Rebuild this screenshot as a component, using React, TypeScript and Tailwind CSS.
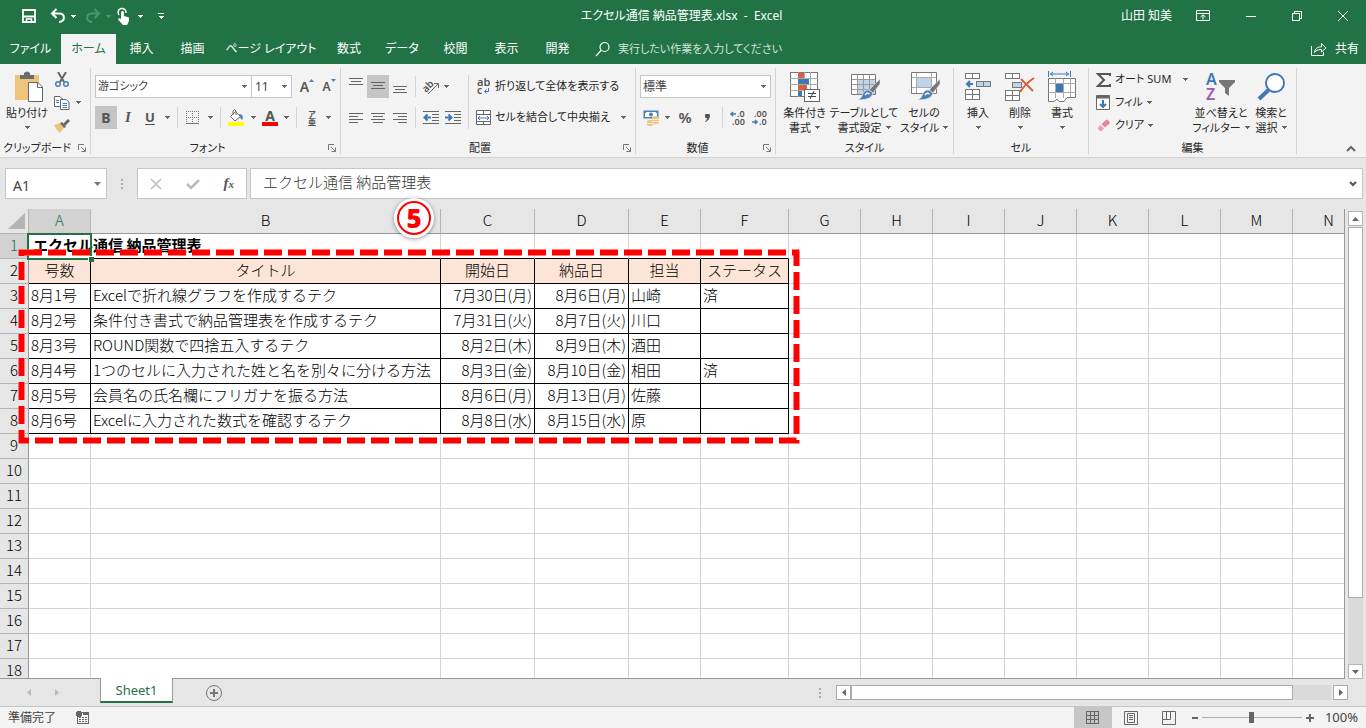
import type { ReactNode } from "react";

const tabs = [
    { name: "ファイル", width: "w-[61px]" },
    { name: "ホーム", width: "w-[55px]", active: true },
    { name: "挿入", width: "w-[51px]" },
    { name: "描画", width: "w-[51px]" },
    { name: "ページ レイアウト", width: "w-[106px]" },
    { name: "数式", width: "w-[50px]" },
    { name: "データ", width: "w-[56px]" },
    { name: "校閲", width: "w-[51px]" },
    { name: "表示", width: "w-[51px]" },
    { name: "開発", width: "w-[51px]" },
];

const columns = [
    { name: "A", width: "w-[62px]" },
    { name: "B", width: "w-[350px]" },
    { name: "C", width: "w-[94px]" },
    { name: "D", width: "w-[94px]" },
    { name: "E", width: "w-[72px]" },
    { name: "F", width: "w-[88px]" },
    ..."GHIJKLMNOPQR".split("").map((name) => ({ name, width: "w-[72px]" })),
];

const data = [
    ["号数", "タイトル", "開始日", "納品日", "担当", "ステータス"],
    ["8月1号", "Excelで折れ線グラフを作成するテク", "7月30日(月)", "8月6日(月)", "山崎", "済"],
    ["8月2号", "条件付き書式で納品管理表を作成するテク", "7月31日(火)", "8月7日(火)", "川口", ""],
    ["8月3号", "ROUND関数で四捨五入するテク", "8月2日(木)", "8月9日(木)", "酒田", ""],
    ["8月4号", "1つのセルに入力された姓と名を別々に分ける方法", "8月3日(金)", "8月10日(金)", "相田", "済"],
    ["8月5号", "会員名の氏名欄にフリガナを振る方法", "8月6日(月)", "8月13日(月)", "佐藤", ""],
    ["8月6号", "Excelに入力された数式を確認するテク", "8月8日(水)", "8月15日(水)", "原", ""],
];

const rowNumbers = Array.from({ length: 19 }, (_, i) => i + 1);

function Caret({ className = "fill-[#666]" }: { className?: string }) {
    return (
        <svg viewBox="0 0 5 3" className={`w-[5px] h-[3px] shrink-0 ${className}`} shapeRendering="crispEdges">
            <path d="M0 0H5L2.5 3Z" />
        </svg>
    );
}

function CaretButton({ label, className = "w-[10px]" }: { label: string; className?: string }) {
    return (
        <button aria-label={label} className={`h-[23px] flex items-center justify-center ${className}`}>
            <Caret />
        </button>
    );
}

function Tool({ label, on, className = "w-[22px]", children }: { label: string; on?: boolean; className?: string; children: ReactNode }) {
    return (
        <button aria-label={label} className={`h-[23px] flex items-center justify-center shrink-0 ${className} ${on ? "bg-[#c5c5c5]" : ""}`}>
            {children}
        </button>
    );
}

function Divider() {
    return <div className="w-px h-[21px] bg-[#d4d4d4] shrink-0" />;
}

function Group({ label, width, launcher, children }: { label: string; width: string; launcher?: boolean; children: ReactNode }) {
    return (
        <section className={`flex shrink-0 pt-1 ${width}`}>
            <div className="flex-1 flex flex-col">
                <div className="flex h-[71px]">{children}</div>
                <div className="flex items-center h-[18px]">
                    <span className="flex-1 text-center leading-[18px] whitespace-nowrap">{label}</span>
                    {launcher && (
                        <button aria-label={`${label}の設定`} className="w-4 flex justify-center">
                            <svg viewBox="0 0 8 8" className="w-2 h-2" fill="none" stroke="#777">
                                <path d="M0.5 6V0.5H6M3 3L7 7M7.5 3.5V7.5H3.5" />
                            </svg>
                        </button>
                    )}
                </div>
            </div>
            <div className="w-px h-[86px] bg-[#d4d4d4]" />
        </section>
    );
}

function BigButton({ icon, lines, width }: { icon: ReactNode; lines: string[]; width: string }) {
    return (
        <button className={`flex flex-col items-center shrink-0 h-[70px] whitespace-nowrap leading-[15px] ${width}`}>
            <span className="h-[37px] flex items-center justify-center">{icon}</span>
            <span>{lines[0]}</span>
            <span className="flex items-center gap-1 h-[15px]">
                {lines[1]}
                <Caret />
            </span>
        </button>
    );
}

function AlignIcon({ lines }: { lines: [number, number][] }) {
    return (
        <svg viewBox="0 0 14 12" className="w-[14px] h-3" stroke="#666" shapeRendering="crispEdges">
            {lines.map(([start, end], i) => (
                <path key={i} d={`M${start} ${i * 3 + 1.5}H${end}`} />
            ))}
        </svg>
    );
}

function ViewIcon({ d }: { d: string }) {
    return (
        <svg viewBox="0 0 16 16" className="w-4 h-4" fill="none" stroke="#666">
            <path d={d} />
        </svg>
    );
}

function TitleBar() {
    return (
        <header className="flex items-center h-8 text-white">
            <div className="flex-1 flex items-center pl-[21px]">
                <button aria-label="上書き保存" className="w-4 h-4">
                    <svg viewBox="0 0 16 16" className="w-4 h-4" fill="none" stroke="#fff" strokeWidth="1.800">
                        <path d="M2 2H14V14H2ZM2 8.500H14" />
                        <path d="M5.500 14V11H10.500V14" strokeWidth="1.500" />
                    </svg>
                </button>
                <button aria-label="元に戻す" className="w-4 h-4 ml-[13px]">
                    <svg viewBox="0 0 16 16" className="w-4 h-4" fill="none" stroke="#fff" strokeWidth="2">
                        <path d="M6.500 1L2 5.500L6.500 10M2.500 5.500H9C15.500 5.500 15.500 13.500 9 14" />
                    </svg>
                </button>
                <button aria-label="元に戻す一覧" className="flex items-center justify-center w-3 h-4 ml-px">
                    <Caret className="fill-white" />
                </button>
                <button aria-label="やり直し" className="w-4 h-4 ml-[6px]">
                    <svg viewBox="0 0 16 16" className="w-4 h-4" fill="none" stroke="#4f9370" strokeWidth="2">
                        <path d="M9.500 1L14 5.500L9.500 10M13.500 5.500H7C0.500 5.500 0.500 13.500 7 14" />
                    </svg>
                </button>
                <button aria-label="やり直し一覧" className="flex items-center justify-center w-3 h-4 ml-px">
                    <Caret className="fill-[#4f9370]" />
                </button>
                <button aria-label="タッチ/マウス モード" className="w-4 h-5 ml-[2px]">
                    <svg viewBox="0 0 16 20" className="w-4 h-5">
                        <path d="M3 9A4 4 0 1 1 10 7" fill="none" stroke="#fff" strokeWidth="1.500" />
                        <path d="M5 6Q6.500 4 8 6V10L13 11.500V15L11 19H7L2 13.500Q2.500 11.500 5 13Z" fill="#fff" />
                    </svg>
                </button>
                <button aria-label="モード一覧" className="flex items-center justify-center w-4 h-4">
                    <Caret className="fill-white" />
                </button>
                <button aria-label="クイック アクセス ツール バーのカスタマイズ" className="flex items-center justify-center w-4 h-4 ml-[5px]">
                    <svg viewBox="0 0 6 6" className="w-[6px] h-[6px]" fill="#fff" shapeRendering="crispEdges">
                        <path d="M0 0H6V1H0ZM0 3H6L3 6Z" />
                    </svg>
                </button>
            </div>
            <h1 className="whitespace-pre pr-2">エクセル通信 納品管理表.xlsx  -  Excel</h1>
            <div className="flex-1 flex items-center justify-end pr-4">
                <span className="mr-6">山田 知美</span>
                <button aria-label="リボンの表示オプション" className="mr-9">
                    <svg viewBox="0 0 14 12" className="w-[14px] h-3" fill="none" stroke="#fff">
                        <path d="M0.500 0.500H13.500V10.500H0.500ZM0.500 3.500H13.500M7 9.500V5M4.500 7L7 4.800L9.500 7" />
                    </svg>
                </button>
                <button aria-label="最小化" className="mr-9">
                    <svg viewBox="0 0 10 10" className="w-[10px] h-[10px]" stroke="#fff" shapeRendering="crispEdges">
                        <path d="M0 5.500H10" />
                    </svg>
                </button>
                <button aria-label="元のサイズに戻す" className="mr-9">
                    <svg viewBox="0 0 10 10" className="w-[10px] h-[10px]" fill="none" stroke="#fff" shapeRendering="crispEdges">
                        <path d="M0.500 2.500H7.500V9.500H0.500ZM2.500 2.500V0.500H9.500V7.500H7.500" />
                    </svg>
                </button>
                <button aria-label="閉じる" className="mr-[2px]">
                    <svg viewBox="0 0 10 10" className="w-[10px] h-[10px]" stroke="#fff">
                        <path d="M0 0L10 10M10 0L0 10" />
                    </svg>
                </button>
            </div>
        </header>
    );
}

function TabBar() {
    return (
        <nav className="flex items-end h-8 text-white">
            {tabs.map((tab) => (
                <button
                    key={tab.name}
                    className={`h-[30px] shrink-0 text-center whitespace-nowrap ${tab.width} ${tab.active ? "bg-[#f3f3f3] text-[#217346]" : ""}`}
                >
                    {tab.name}
                </button>
            ))}
            <label className="flex-1 flex items-center h-[30px] ml-3">
                <svg viewBox="0 0 16 16" className="w-4 h-4 mr-[7px]" fill="none" stroke="#fff" strokeWidth="1.200">
                    <circle cx="9.500" cy="6" r="4.500" />
                    <path d="M6.300 9.200L1 15" />
                </svg>
                <input
                    placeholder="実行したい作業を入力してください"
                    aria-label="操作アシスト"
                    className="w-[220px] bg-transparent outline-none text-[11px] placeholder:text-[#d3e3da]"
                />
            </label>
            <button className="flex items-center h-[30px] mr-[7px] gap-2">
                <svg viewBox="0 0 16 14" className="w-4 h-[14px]" fill="none" stroke="#fff">
                    <path d="M0.500 4V13.500H12.500V10M3.500 10.500C4 6.500 6.500 4.800 10.500 4.800V1.500L15 6L10.500 10V7.500C7 7.500 5 8.500 3.500 10.500Z" />
                </svg>
                共有
            </button>
        </nav>
    );
}

function ClipboardGroup() {
    return (
        <Group label="クリップボード" width="w-[91px]" launcher>
            <BigButton
                width="w-[54px]"
                lines={["貼り付け", ""]}
                icon={
                    <svg viewBox="0 0 30 32" className="w-[30px] h-8 ml-1">
                        <path d="M1 4H25V29H1Z" fill="#ecc47c" />
                        <path d="M6 8V4H10V2Q13 -1 16 2V4H20V8Z" fill="#6d6d6d" />
                        <path d="M14.500 11.500H24L28.500 16V30.500H14.500Z" fill="#fff" stroke="#666" />
                        <path d="M23.500 11.500V16.500H28.500" fill="none" stroke="#666" />
                    </svg>
                }
            />
            <div className="flex flex-col">
                <Tool label="切り取り" className="w-4">
                    <svg viewBox="0 0 16 16" className="w-4 h-4" fill="none" strokeWidth="1.500">
                        <path d="M4 0L10 10M12 0L6 10" stroke="#666" strokeWidth="2" />
                        <circle cx="4" cy="12" r="2.300" stroke="#4a80b8" />
                        <circle cx="12" cy="12" r="2.300" stroke="#4a80b8" />
                    </svg>
                </Tool>
                <div className="flex items-center">
                    <Tool label="コピー" className="w-4">
                        <svg viewBox="0 0 16 14" className="w-4 h-[14px]" fill="#fff" stroke="#666">
                            <path d="M0.500 0.500H6L8.500 3V10.500H0.500Z" />
                            <path d="M6.500 3.500H12L15 6V13.500H6.500Z" />
                            <path d="M2 4.500H5M2 6.500H5M8.500 7.500H13M8.500 9.500H13M8.500 11.500H13" stroke="#4a80b8" />
                        </svg>
                    </Tool>
                    <CaretButton label="コピーの一覧" className="w-4" />
                </div>
                <Tool label="書式のコピー/貼り付け" className="w-4">
                    <svg viewBox="0 0 16 14" className="w-4 h-[14px]">
                        <path d="M0 6L6 4L10 9L6 14Q2 11 0 6Z" fill="#ecc47c" />
                        <path d="M6 4L8 3L12 8L10 9Z" fill="#666" />
                        <path d="M10 6L15 1" stroke="#666" strokeWidth="3" />
                    </svg>
                </Tool>
            </div>
        </Group>
    );
}

function FontGroup() {
    return (
        <Group label="フォント" width="w-[250px]" launcher>
            <div className="flex flex-col gap-2 pl-1 pt-[7px]">
                <div className="flex items-center">
                    <div className="relative flex items-center">
                        <select aria-label="フォント名" className="appearance-none w-[157px] h-[23px] pl-[2px] bg-white border border-[#c6c6c6] text-[#444]">
                            <option>游ゴシック</option>
                        </select>
                        <Caret className="absolute right-[5px] pointer-events-none fill-[#666]" />
                    </div>
                    <div className="relative flex items-center -ml-px">
                        <select aria-label="フォント サイズ" className="appearance-none w-[41px] h-[23px] pl-[3px] bg-white border border-[#c6c6c6] text-[12px] text-[#444]">
                            <option>11</option>
                        </select>
                        <Caret className="absolute right-[5px] pointer-events-none fill-[#666]" />
                    </div>
                    <Tool label="フォント サイズの拡大" className="w-[22px] ml-1 text-[14px] font-semibold text-[#555]">
                        A
                        <svg viewBox="0 0 5 3" className="w-[5px] h-[3px] mb-3" fill="#4a80b8">
                            <path d="M0 3L2.500 0L5 3Z" />
                        </svg>
                    </Tool>
                    <Tool label="フォント サイズの縮小" className="w-[22px] text-[12px] font-semibold text-[#555]">
                        A
                        <svg viewBox="0 0 5 3" className="w-[5px] h-[3px] mb-3" fill="#4a80b8">
                            <path d="M0 0H5L2.500 3Z" />
                        </svg>
                    </Tool>
                </div>
                <div className="flex items-center text-[#555]">
                    <Tool label="太字" on>
                        <b className="text-[14px]">B</b>
                    </Tool>
                    <Tool label="斜体">
                        <i className="text-[15px] font-[Liberation_Serif] font-bold">I</i>
                    </Tool>
                    <Tool label="下線">
                        <span className="text-[13px] font-bold underline underline-offset-2">U</span>
                    </Tool>
                    <CaretButton label="下線の種類" className="w-3 mr-1" />
                    <Divider />
                    <Tool label="罫線" className="w-[22px] ml-1">
                        <svg viewBox="0 0 14 14" className="w-[14px] h-[14px]" fill="none" stroke="#777" shapeRendering="crispEdges">
                            <path d="M0.500 0V13M6.500 0V13M12.500 0V13M0 0.500H13M0 6.500H13" strokeDasharray="1 1" />
                            <path d="M0 12.500H13" />
                        </svg>
                    </Tool>
                    <CaretButton label="罫線の一覧" className="w-3 mr-1" />
                    <Divider />
                    <Tool label="塗りつぶしの色" className="w-[22px] ml-1">
                        <svg viewBox="0 0 16 17" className="w-4 h-[17px]">
                            <path d="M2.500 7.500L7.500 2.500L12.500 7.500L7 12Z" fill="#fff" stroke="#666" />
                            <path d="M5 6V2Q6.500 -1 8 2V6" fill="none" stroke="#666" />
                            <path d="M11 5Q16 5 14.500 11Q12 10 11 5Z" fill="#4a80b8" />
                            <path d="M0 13H16V17H0Z" fill="#ff0" />
                        </svg>
                    </Tool>
                    <CaretButton label="塗りつぶしの色の一覧" className="w-3" />
                    <Tool label="フォントの色">
                        <span className="flex flex-col items-center w-4 h-[17px]">
                            <span className="h-[13px] text-[14px] leading-[13px] font-bold">A</span>
                            <span className="w-4 h-1 bg-[#f00]" />
                        </span>
                    </Tool>
                    <CaretButton label="フォントの色の一覧" className="w-[10px] mr-[5px]" />
                    <Divider />
                    <Tool label="ふりがなの表示" className="w-[22px] ml-1">
                        <span className="flex flex-col items-center text-[8px] leading-2 font-bold">
                            <span>ア</span>
                            <span>亜</span>
                        </span>
                    </Tool>
                    <CaretButton label="ふりがなの一覧" />
                </div>
            </div>
        </Group>
    );
}

function AlignmentGroup() {
    return (
        <Group label="配置" width="w-[295px]" launcher>
            <div className="flex flex-col gap-2 pl-1 pt-[7px]">
                <div className="flex items-center">
                    <Tool label="上揃え">
                        <span className="mb-2"><AlignIcon lines={[[0, 14], [2, 12], [0, 14]]} /></span>
                    </Tool>
                    <Tool label="上下中央揃え" on>
                        <span className="mt-px"><AlignIcon lines={[[0, 14], [2, 12], [0, 14]]} /></span>
                    </Tool>
                    <Tool label="下揃え">
                        <span className="mt-2"><AlignIcon lines={[[0, 14], [2, 12], [0, 14]]} /></span>
                    </Tool>
                    <div className="pl-1">
                        <Divider />
                    </div>
                    <Tool label="方向" className="w-[22px] ml-1">
                        <svg viewBox="0 0 17 16" className="w-[17px] h-4 overflow-visible">
                            <text x="0" y="11" transform="rotate(-45 5 9)" fontSize="10" fontWeight="600" fill="#555">ab</text>
                            <path d="M5 15L15 5M11 4.500H15.500V9" fill="none" stroke="#666" />
                        </svg>
                    </Tool>
                    <CaretButton label="方向の一覧" className="w-2" />
                </div>
                <div className="flex items-center">
                    <Tool label="左揃え">
                        <AlignIcon lines={[[0, 14], [0, 9], [0, 14], [0, 9]]} />
                    </Tool>
                    <Tool label="中央揃え">
                        <AlignIcon lines={[[0, 14], [2, 12], [0, 14], [2, 12]]} />
                    </Tool>
                    <Tool label="右揃え">
                        <AlignIcon lines={[[0, 14], [5, 14], [0, 14], [5, 14]]} />
                    </Tool>
                    <div className="pl-1">
                        <Divider />
                    </div>
                    <Tool label="インデントを減らす" className="w-[22px] ml-1">
                        <svg viewBox="0 0 16 13" className="w-4 h-[13px]" fill="none" stroke="#666">
                            <path d="M0 0.500H16M9 3.500H16M9 6.500H16M9 9.500H16M0 12.500H16" />
                            <path d="M8 6.500H1.500M4.500 3.500L1.500 6.500L4.500 9.500" stroke="#3f78b5" strokeWidth="2" />
                        </svg>
                    </Tool>
                    <Tool label="インデントを増やす">
                        <svg viewBox="0 0 16 13" className="w-4 h-[13px]" fill="none" stroke="#666">
                            <path d="M0 0.500H16M9 3.500H16M9 6.500H16M9 9.500H16M0 12.500H16" />
                            <path d="M0 6.500H6.500M3.500 3.500L6.500 6.500L3.500 9.500" stroke="#3f78b5" strokeWidth="2" />
                        </svg>
                    </Tool>
                </div>
            </div>
            <div className="w-px h-[54px] mt-[7px] ml-1 bg-[#d4d4d4]" />
            <div className="flex flex-col gap-2 pl-[7px] pt-[7px]">
                <button className="flex items-center h-[23px] gap-[3px] whitespace-nowrap">
                    <svg viewBox="0 0 16 16" className="w-4 h-4 overflow-visible">
                        <text x="1" y="7" fontSize="11" fontWeight="600" fill="#555">ab</text>
                        <text x="1" y="15" fontSize="10" fontWeight="600" fill="#555">c</text>
                        <path d="M12.500 9V12.500H8.500M10.500 10.500L8.500 12.500L10.500 14.500" fill="none" stroke="#3f78b5" />
                    </svg>
                    折り返して全体を表示する
                </button>
                <div className="flex items-center">
                    <button className="flex items-center h-[23px] gap-[3px] w-[142px] whitespace-nowrap">
                        <svg viewBox="0 0 16 16" className="w-4 h-4 shrink-0" fill="#fff" stroke="#666">
                            <path d="M0.500 0.500H14.500V14.500H0.500ZM0.500 4.500H14.500M0.500 11.500H14.500M7.500 0.500V4.500M7.500 11.500V14.500" />
                            <path d="M2 8H13M4 6L2 8L4 10M11 6L13 8L11 10" fill="none" stroke="#3f78b5" />
                        </svg>
                        セルを結合して中央揃え
                    </button>
                    <CaretButton label="結合の一覧" />
                </div>
            </div>
        </Group>
    );
}

function NumberGroup() {
    return (
        <Group label="数値" width="w-[140px]" launcher>
            <div className="flex flex-col gap-2 pl-1 pt-[7px]">
                <div className="relative flex items-center">
                    <select aria-label="数値の書式" className="appearance-none w-[131px] h-[23px] pl-[2px] bg-white border border-[#c6c6c6] text-[12px] text-[#444]">
                        <option>標準</option>
                    </select>
                    <Caret className="absolute right-[5px] pointer-events-none fill-[#666]" />
                </div>
                <div className="flex items-center text-[#555]">
                    <Tool label="通貨表示形式">
                        <svg viewBox="0 0 17 16" className="w-[17px] h-4">
                            <path d="M0.500 0.500H15.500V8.500H0.500Z" fill="#4a80b8" />
                            <path d="M2 3Q3 3 3.500 2H12.500Q13 3 14 3V7H2Z" fill="#fff" />
                            <circle cx="8" cy="4.500" r="2" fill="#4a80b8" />
                            <path d="M9 7Q12.500 5 16 7V13Q12.500 15 9 13Z" fill="#ecc47c" />
                            <path d="M4 11Q7 9 10 11V15Q7 17 4 15Z" fill="#ecc47c" />
                            <path d="M9 9.500H16M9 11.500H16M4 13.500H10" stroke="#fff" strokeWidth="0.700" />
                        </svg>
                    </Tool>
                    <CaretButton label="通貨の一覧" />
                    <Tool label="パーセント スタイル" className="w-[22px] ml-[2px] text-[15px] font-semibold">%</Tool>
                    <Tool label="桁区切りスタイル">
                        <svg viewBox="0 0 5 8" className="w-[5px] h-2" fill="#555">
                            <path d="M1 0H4Q5 0 5 1.500Q5 5 1 8H0Q2 6 2 4H1Q0 4 0 3V1Q0 0 1 0Z" />
                        </svg>
                    </Tool>
                    <div className="pl-1">
                        <Divider />
                    </div>
                    <Tool label="小数点以下の表示桁数を増やす" className="w-[22px] ml-1">
                        <svg viewBox="0 0 16 16" className="w-4 h-4 overflow-visible" fontSize="9" fontWeight="600" fill="#555">
                            <text x="7" y="7">.0</text>
                            <text x="2" y="15">.00</text>
                            <path d="M6 4H1M3 2L1 4L3 6" fill="none" stroke="#3f78b5" strokeWidth="1.500" />
                        </svg>
                    </Tool>
                    <Tool label="小数点以下の表示桁数を減らす">
                        <svg viewBox="0 0 16 16" className="w-4 h-4 overflow-visible" fontSize="9" fontWeight="600" fill="#555">
                            <text x="2" y="7">.00</text>
                            <text x="7" y="15">.0</text>
                            <path d="M0 12H5M3 10L5 12L3 14" fill="none" stroke="#3f78b5" strokeWidth="1.500" />
                        </svg>
                    </Tool>
                </div>
            </div>
        </Group>
    );
}

function BrushPaint() {
    return (
        <>
            <path d="M29 7V12L22 21L18 18Z" fill="#777" stroke="#f3f3f3" strokeWidth="0.500" />
            <path d="M18 18L22 21Q21 28 7 28Q11 26 12 21Q15 17 18 18Z" fill="#4a80b8" stroke="#f3f3f3" strokeWidth="0.700" />
            <path d="M14 23Q16 20 18.500 22" fill="none" stroke="#fff" strokeWidth="1.500" />
        </>
    );
}

function StylesGroup() {
    return (
        <Group label="スタイル" width="w-[178px]">
            <BigButton
                width="w-[57px]"
                lines={["条件付き", "書式"]}
                icon={
                    <svg viewBox="0 0 30 30" className="w-[30px] h-[30px]" shapeRendering="crispEdges">
                        <path d="M0.500 0.500H27.500V24.500H0.500Z" fill="#fff" stroke="#777" />
                        <path d="M8.500 0V25M14.500 0V25M20.500 0V25M0 6.500H28M0 12.500H28M0 18.500H28" stroke="#aaa" />
                        <path d="M8 1H14V6H8ZM8 13H17V18H8Z" fill="#d9603b" />
                        <path d="M8 7H19V12H8ZM8 19H12V24H8Z" fill="#3f78b5" />
                        <path d="M14.500 17.500H29.500V29.500H14.500Z" fill="#fff" stroke="#666" />
                        <path d="M18 21.500H26M18 24.500H26M24 19L20 27" stroke="#444" shapeRendering="auto" />
                    </svg>
                }
            />
            <BigButton
                width="w-[62px]"
                lines={["テーブルとして", "書式設定"]}
                icon={
                    <svg viewBox="0 0 30 30" className="w-[30px] h-[30px] ml-1">
                        <path d="M0.500 2.500H24.500V22.500H0.500Z" fill="#fff" stroke="#777" />
                        <path d="M7 8H24V22H7Z" fill="#bfd3ea" />
                        <path d="M6.500 3V22M12.500 3V22M18.500 3V22M1 7.500H24M1 12.500H24M1 17.500H24" stroke="#999" />
                        <BrushPaint />
                    </svg>
                }
            />
            <BigButton
                width="w-[58px]"
                lines={["セルの", "スタイル"]}
                icon={
                    <svg viewBox="0 0 30 30" className="w-[30px] h-[30px] ml-1">
                        <path d="M0.500 0.500H25.500V21.500H0.500Z" fill="#fff" stroke="#777" />
                        <path d="M5.500 1V21M20.500 1V21M1 5.500H25M1 15.500H25" stroke="#aaa" />
                        <path d="M6 6H20V15H6Z" fill="#bfd3ea" />
                        <BrushPaint />
                    </svg>
                }
            />
        </Group>
    );
}

function CellsGroup() {
    return (
        <Group label="セル" width="w-[135px]">
            <BigButton
                width="w-12"
                lines={["挿入", ""]}
                icon={
                    <svg viewBox="0 0 27 28" className="w-[27px] h-7" fill="#fff" stroke="#777" shapeRendering="crispEdges">
                        <path d="M0.500 0.500H14.500V5.500H0.500ZM7.500 0.500V5.500M0.500 16.500H14.500V26.500H0.500ZM7.500 16.500V26.500M0.500 21.500H14.500" />
                        <path d="M11.500 8.500H25.500V13.500H11.500ZM18.500 8.500V13.500" fill="#bfd3ea" />
                        <path d="M8 11H2M5 8L2 11L5 14" fill="none" stroke="#3f78b5" strokeWidth="2" shapeRendering="auto" />
                    </svg>
                }
            />
            <BigButton
                width="w-9"
                lines={["削除", ""]}
                icon={
                    <svg viewBox="0 0 30 28" className="w-[30px] h-7" fill="#fff" stroke="#777" shapeRendering="crispEdges">
                        <path d="M0.500 0.500H14.500V5.500H0.500ZM7.500 0.500V5.500M0.500 17.500H14.500V27.500H0.500ZM7.500 17.500V27.500M0.500 22.500H14.500" />
                        <path d="M7.500 9.500H16.500V14.500H7.500Z" fill="#bfd3ea" />
                        <path d="M16 6L28 18M29 5Q21 10 15 19" fill="none" stroke="#d9603b" strokeWidth="2" shapeRendering="auto" />
                    </svg>
                }
            />
            <BigButton
                width="w-12"
                lines={["書式", ""]}
                icon={
                    <svg viewBox="0 0 28 32" className="w-7 h-8" fill="#fff" stroke="#777">
                        <path d="M0.500 7.500H27.500V26.500H19L16 30.500H11L9 28L6 30.500H0.500Z" />
                        <path d="M7.500 7.500V27M15.500 7.500V27M22.500 7.500V26M0.500 12.500H27.500M0.500 21.500H27.500" stroke="#aaa" fill="none" />
                        <path d="M8 13H15V21H8Z" fill="#3f78b5" stroke="none" />
                        <path d="M0.500 0V6M22.500 0V6M2 3H21M5 1L2.500 3L5 5M18 1L20.500 3L18 5" fill="none" stroke="#3f78b5" />
                    </svg>
                }
            />
        </Group>
    );
}

function EditingGroup() {
    return (
        <Group label="編集" width="w-[208px]">
            <div className="flex flex-col pl-[7px] w-[104px]">
                <div className="flex items-center">
                    <button className="flex items-center h-[23px] gap-1 w-[84px] whitespace-nowrap">
                        <svg viewBox="0 0 15 16" className="w-[15px] h-4 shrink-0" fill="none" stroke="#555" strokeWidth="2">
                            <path d="M14 4V2H2L8 8L2 14H14V12" />
                        </svg>
                        オート SUM
                    </button>
                    <CaretButton label="オート SUM の一覧" />
                </div>
                <button className="flex items-center h-[23px] gap-1">
                    <svg viewBox="0 0 15 16" className="w-[15px] h-4" fill="#fff" stroke="#666">
                        <path d="M0.500 0.500H13.500V14.500H0.500Z" />
                        <path d="M0.500 2H13.500" strokeWidth="3" />
                        <path d="M7 5V12M4 9L7 12L10 9" fill="none" stroke="#3f78b5" strokeWidth="2" />
                    </svg>
                    フィル
                    <Caret />
                </button>
                <button className="flex items-center h-[23px] gap-1">
                    <svg viewBox="0 0 15 16" className="w-[15px] h-4" fill="#e8839b">
                        <path d="M5.500 6L10 2Q11 1 12 2L13.500 4Q14 5 13 6L9 9.500Z" />
                        <path d="M4.500 7L8 10.500L5.500 13Q4.500 13.500 3.500 12.500L2 11Q1.500 10 2.500 9Z" fill="#ef9fb2" />
                    </svg>
                    クリア
                    <Caret />
                </button>
            </div>
            <BigButton
                width="w-[56px]"
                lines={["並べ替えと", "フィルター"]}
                icon={
                    <svg viewBox="0 0 30 30" className="w-[30px] h-[30px] overflow-visible" fontSize="16" fontWeight="600">
                        <text x="0" y="13" fill="#3f78b5">A</text>
                        <text x="0" y="28" fill="#9b59b6">Z</text>
                        <path d="M13 8H29V10L23 16V24L19 21V16L13 10Z" fill="#777" />
                    </svg>
                }
            />
            <BigButton
                width="w-[44px]"
                lines={["検索と", "選択"]}
                icon={
                    <svg viewBox="0 0 28 28" className="w-7 h-7" fill="none" stroke="#3f78b5">
                        <circle cx="18" cy="10" r="9" fill="#fff" strokeWidth="2" />
                        <path d="M11.500 17L2 26" strokeWidth="4" />
                    </svg>
                }
            />
        </Group>
    );
}

function Ribbon() {
    return (
        <div className="flex h-[94px] bg-[#f3f3f3] border-b border-[#d2d2d2] text-[11px]">
            <ClipboardGroup />
            <FontGroup />
            <AlignmentGroup />
            <NumberGroup />
            <StylesGroup />
            <CellsGroup />
            <EditingGroup />
            <div className="flex-1 flex items-end justify-end pr-[10px] pb-1">
                <button aria-label="リボンを折りたたむ">
                    <svg viewBox="0 0 10 8" className="w-[10px] h-2" fill="none" stroke="#666" strokeWidth="2">
                        <path d="M1 6L5 2L9 6" />
                    </svg>
                </button>
            </div>
        </div>
    );
}

function FormulaBar() {
    return (
        <div className="flex items-center h-[51px] pl-[5px] pr-[3px] bg-[#e6e6e6]">
            <div className="relative flex items-center">
                <input aria-label="名前ボックス" defaultValue="A1" className="w-[102px] h-[31px] pl-[7px] pt-[3px] bg-white border border-[#c6c6c6] text-[14px] text-[#444]" />
                <svg viewBox="0 0 7 4" className="absolute right-[6px] w-[7px] h-1 pointer-events-none" fill="#777">
                    <path d="M0 0H7L3.500 4Z" />
                </svg>
            </div>
            <svg viewBox="0 0 2 10" className="w-[2px] h-[10px] mx-[14px]" fill="#aaa" shapeRendering="crispEdges">
                <path d="M0 0H2V2H0ZM0 4H2V6H0ZM0 8H2V10H0Z" />
            </svg>
            <div className="flex items-center justify-around w-[110px] h-[31px] bg-white border border-[#c6c6c6]">
                <button aria-label="キャンセル">
                    <svg viewBox="0 0 12 12" className="w-3 h-3" stroke="#bbb" strokeWidth="1.500">
                        <path d="M1 1L11 11M11 1L1 11" />
                    </svg>
                </button>
                <button aria-label="入力">
                    <svg viewBox="0 0 14 12" className="w-[14px] h-3" fill="none" stroke="#bbb" strokeWidth="2.500">
                        <path d="M1 6L5 10L13 2" />
                    </svg>
                </button>
                <button aria-label="関数の挿入" className="font-[Liberation_Serif] italic font-bold text-[15px] leading-4 text-[#555]">
                    f<span className="text-[11px]">x</span>
                </button>
            </div>
            <div className="relative flex-1 flex items-center ml-[3px]">
                <input
                    aria-label="数式バー"
                    defaultValue="エクセル通信 納品管理表"
                    className="w-full h-[31px] pl-3 pb-1 bg-white border border-[#c6c6c6] font-['Noto_Sans_CJK_JP',sans-serif] font-light text-[15px] text-[#333] [font-feature-settings:normal]"
                />
                <svg viewBox="0 0 8 6" className="absolute right-[6px] w-2 h-[6px]" fill="none" stroke="#555" strokeWidth="2">
                    <path d="M1 1L4 4L7 1" />
                </svg>
            </div>
        </div>
    );
}

function cellStyle(row: number, col: number) {
    if (col > 5 || row > 8) return "border-[#d4d4d4]";
    if (row === 1) return "border-r-[#d4d4d4] border-b-black";
    if (row === 2) return "border-black bg-[#fce4d6] text-center";
    if (col === 2 || col === 3) return "border-black text-right";
    return "border-black";
}

function Sheet() {
    return (
        <div className="relative flex-1 overflow-hidden bg-white border-r border-b border-[#999]">
            <table className="table-fixed w-[1653px] border-separate border-spacing-0 text-[15px] leading-[22px] text-black font-['Noto_Sans_CJK_JP',sans-serif] [font-feature-settings:normal]">
                <colgroup>
                    <col className="w-[29px]" />
                    {columns.map((column) => (
                        <col key={column.name} className={column.width} />
                    ))}
                </colgroup>
                <thead>
                    <tr className="h-[25px] bg-[#e6e6e6]">
                        <td className="p-0 border-r border-b border-[#b4b4b4]">
                            <svg viewBox="0 0 28 24" className="w-7 h-6" fill="#b4b4b4">
                                <path d="M25 4V20H8Z" />
                            </svg>
                        </td>
                        {columns.map((column, i) => (
                            <th
                                key={column.name}
                                scope="col"
                                className={`p-0 pb-[2px] font-light border-r border-b border-r-[#b4b4b4] border-b-[#999] ${i === 0 ? "bg-[#d2d2d2] text-[#217346]" : ""}`}
                            >
                                {column.name}
                            </th>
                        ))}
                    </tr>
                </thead>
                <tbody>
                    {rowNumbers.map((row) => (
                        <tr key={row} className="h-[25px]">
                            <th
                                scope="row"
                                className={`p-0 pb-[2px] font-light border-r border-b border-r-[#999] border-b-[#b4b4b4] ${row === 1 ? "bg-[#d2d2d2] text-[#217346]" : "bg-[#e6e6e6]"}`}
                            >
                                {row}
                            </th>
                            {columns.map((column, col) => (
                                <td
                                    key={column.name}
                                    className={`px-[2px] border-r border-b font-light whitespace-nowrap ${row === 1 ? "py-0" : "pt-0 pb-[2px]"} ${cellStyle(row, col)}`}
                                >
                                    {row === 1 && col === 0 ? (
                                        <div className="relative h-6">
                                            <b className="block pl-[2px] font-bold">エクセル通信 納品管理表</b>
                                            {/* active cell frame and fill handle */}
                                            <div className="absolute -top-px -bottom-[2px] -left-1 -right-1 border-2 border-[#217346]">
                                                <div className="absolute -right-1 -bottom-1 w-[6px] h-[6px] bg-[#217346] border-t border-l border-white" />
                                            </div>
                                        </div>
                                    ) : (
                                        data[row - 2]?.[col]
                                    )}
                                </td>
                            ))}
                        </tr>
                    ))}
                </tbody>
            </table>

            {/* dashed callout around the table */}
            <svg viewBox="0 0 820 250" className="absolute top-0 left-0 w-[820px] h-[250px] pointer-events-none" fill="none">
                <path d="M24 43.500H796.500V231.500H21.500V43.500H24" stroke="#fff" strokeOpacity="0.500" strokeWidth="7" strokeDasharray="18 6" />
                <path d="M24 43.500H796.500V231.500H21.500V43.500H24" stroke="#f00" strokeWidth="6" strokeDasharray="18 6" />
            </svg>
        </div>
    );
}

function VerticalScroll() {
    return (
        <div className="flex flex-col w-[21px] pl-[3px] pr-[3px] pt-[2px] bg-[#e6e6e6]">
            <button aria-label="上へスクロール" className="flex items-center justify-center h-[15px] bg-white border border-[#b4b4b4]">
                <svg viewBox="0 0 7 4" className="w-[7px] h-1" fill="#666"><path d="M0 4L3.500 0L7 4Z" /></svg>
            </button>
            <div className="flex-1 mt-px bg-[#dadada]">
                <div className="h-[85%] bg-white border border-[#ababab]" />
            </div>
            <button aria-label="下へスクロール" className="flex items-center justify-center h-[15px] bg-white border border-[#b4b4b4]">
                <svg viewBox="0 0 7 4" className="w-[7px] h-1" fill="#666"><path d="M0 0H7L3.500 4Z" /></svg>
            </button>
        </div>
    );
}

function SheetTabs() {
    return (
        <div className="flex h-[27px] pr-[18px] bg-[#e6e6e6]">
            <div className="flex items-center gap-6 w-[100px] pl-[27px]">
                <button aria-label="前のシート">
                    <svg viewBox="0 0 4 7" className="w-1 h-[7px]" fill="#b9b9b9"><path d="M4 0V7L0 3.500Z" /></svg>
                </button>
                <button aria-label="次のシート">
                    <svg viewBox="0 0 4 7" className="w-1 h-[7px]" fill="#b9b9b9"><path d="M0 0V7L4 3.500Z" /></svg>
                </button>
            </div>
            <button className="relative z-10 w-[73px] h-[25px] -mt-px bg-white border-x border-x-[#999] border-b-2 border-b-[#217346] text-[13px] leading-6 text-[#217346]">
                Sheet1
            </button>
            <button aria-label="新しいシート" className="ml-8">
                <svg viewBox="0 0 18 18" className="w-[18px] h-[18px]" fill="none" stroke="#777">
                    <circle cx="9" cy="9" r="7.500" />
                    <path d="M5 9H13M9 5V13" strokeWidth="2" />
                </svg>
            </button>
            <div className="flex-1" />
            <div className="flex items-center w-[529px]">
                <svg viewBox="0 0 2 10" className="w-[2px] h-[10px] mr-[15px]" fill="#aaa" shapeRendering="crispEdges">
                    <path d="M0 0H2V2H0ZM0 4H2V6H0ZM0 8H2V10H0Z" />
                </svg>
                <button aria-label="左へスクロール" className="flex items-center justify-center w-[15px] h-[15px] bg-white border border-[#ababab]">
                    <svg viewBox="0 0 4 7" className="w-1 h-[7px]" fill="#666"><path d="M4 0V7L0 3.500Z" /></svg>
                </button>
                <div className="flex-1 h-[15px] bg-[#dadada]">
                    <div className="w-[92%] h-[15px] bg-white border border-[#ababab]" />
                </div>
                <button aria-label="右へスクロール" className="flex items-center justify-center w-[15px] h-[15px] ml-[2px] bg-white border border-[#ababab]">
                    <svg viewBox="0 0 4 7" className="w-1 h-[7px]" fill="#666"><path d="M0 0V7L4 3.500Z" /></svg>
                </button>
            </div>
        </div>
    );
}

function StatusBar() {
    return (
        <footer className="flex items-center h-[22px] pl-2 pr-2 bg-[#f3f3f3] border-t border-[#c6c6c6] text-[#444]">
            <span>準備完了</span>
            <button aria-label="マクロの記録" className="ml-5">
                <svg viewBox="0 0 13 13" className="w-[13px] h-[13px]" fill="none" stroke="#666" shapeRendering="crispEdges">
                    <path d="M1.500 5V12.500H12.500V1.500H6" />
                    <path d="M7 2H12" strokeWidth="3" />
                    <path d="M3 6.500H11M3 8.500H11M3 10.500H11" strokeDasharray="2 1" />
                    <circle cx="3" cy="3" r="3" fill="#666" stroke="none" />
                </svg>
            </button>
            <div className="flex-1" />
            <button aria-label="標準" className="flex items-center justify-center w-[38px] h-[22px] bg-[#c6c6c6]">
                <svg viewBox="0 0 13 13" className="w-[13px] h-[13px]" fill="none" stroke="#666" shapeRendering="crispEdges">
                    <path d="M0.500 0.500H12.500V12.500H0.500ZM4.500 0V13M8.500 0V13M0 4.500H13M0 8.500H13" />
                </svg>
            </button>
            <button aria-label="ページ レイアウト" className="flex items-center justify-center w-[38px] h-[22px]">
                <ViewIcon d="M1.500 1.500H14.500V14.500H1.500ZM4.500 3.500H11.500V12.500H4.500ZM6 5.500H10M6 7.500H10M6 9.500H10" />
            </button>
            <button aria-label="改ページ プレビュー" className="flex items-center justify-center w-[38px] h-[22px]">
                <ViewIcon d="M1.500 1.500H14.500V14.500H1.500ZM1.500 9.500H9.500V1.500M5.500 1.500V9.500" />
            </button>
            <button aria-label="縮小" className="w-[10px] ml-1">
                <svg viewBox="0 0 6 2" className="w-[6px] h-[2px]" fill="#666"><path d="M0 0H6V2H0Z" /></svg>
            </button>
            <input
                type="range"
                aria-label="ズーム"
                defaultValue={50}
                className="appearance-none w-[100px] h-px bg-[#b0b0b0] [&::-webkit-slider-thumb]:appearance-none [&::-webkit-slider-thumb]:w-[5px] [&::-webkit-slider-thumb]:h-[11px] [&::-webkit-slider-thumb]:bg-[#666]"
            />
            <button aria-label="拡大" className="ml-1 mr-[11px]">
                <svg viewBox="0 0 8 8" className="w-2 h-2" fill="#666"><path d="M3 0H5V3H8V5H5V8H3V5H0V3H3Z" /></svg>
            </button>
            <span className="text-[13px]">100%</span>
        </footer>
    );
}

export default function App() {
    return (
        <div className="flex flex-col h-screen overflow-hidden bg-[#e6e6e6] text-[12px] text-[#262626] font-['Noto_Sans','Noto_Sans_CJK_JP',sans-serif] [font-feature-settings:'palt']">
            <div className="bg-[#217346]">
                <TitleBar />
                <TabBar />
            </div>
            <Ribbon />
            <FormulaBar />
            <main className="relative flex-1 flex min-h-0">
                <Sheet />
                <VerticalScroll />
                {/* step number badge */}
                <div className="absolute -top-[11px] left-[394px] w-10 h-10 p-[3px] rounded-full bg-white shadow-[0_1px_4px_rgba(0,0,0,0.4)]">
                    <div className="flex items-center justify-center w-full h-full rounded-full border-2 border-[#f00] text-[26px] leading-[26px] font-black text-[#f00]">
                        5
                    </div>
                </div>
            </main>
            <SheetTabs />
            <StatusBar />
        </div>
    );
}
